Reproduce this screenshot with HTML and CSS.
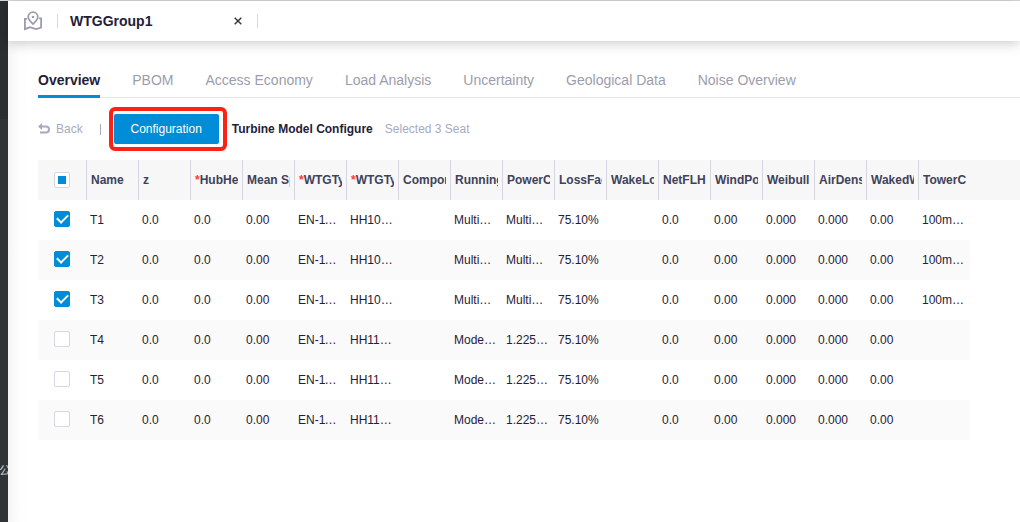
FILE: index.html
```html
<!DOCTYPE html>
<html lang="en">
<head>
<meta charset="utf-8">
<title>WTGGroup1</title>
<link rel="stylesheet" href="styles.css">
</head>
<body>
<div class="app">
  <aside class="rail"><div class="rail-head"></div><div class="rail-body"><span class="rail-label">公</span></div></aside>
  <div class="workspace">
    <header class="topbar">
      <svg class="map-icon" viewBox="0 0 20 20" fill="none" stroke="currentColor" stroke-width="1.8">
        <path d="M10 13C7.200 10.400 5.200 8.600 5.200 6a4.800 4.800 0 0 1 9.600 0C14.800 8.600 12.800 10.400 10 13z"/>
        <circle cx="10" cy="6" r="1.300" fill="currentColor" stroke="none"/>
        <path d="M4 7.800H1.900v10.300l5.100-2 6 2 5.100-1.600V7.400H16"/>
      </svg>
      <span class="divider"></span>
      <span class="file-name">WTGGroup1</span>
      <button class="close" type="button" aria-label="Close WTGGroup1"><svg viewBox="0 0 8 8" stroke="currentColor" stroke-width="1.400"><path d="M.7.7l6.600 6.600M7.300.7L.7 7.300"/></svg></button>
      <span class="divider"></span>
    </header>
    <main class="content">
      <nav class="tabs">
        <a class="tab active" href="#overview">Overview</a>
        <a class="tab" href="#pbom">PBOM</a>
        <a class="tab" href="#economy">Access Economy</a>
        <a class="tab" href="#load">Load Analysis</a>
        <a class="tab" href="#uncertainty">Uncertainty</a>
        <a class="tab" href="#geology">Geological Data</a>
        <a class="tab" href="#noise">Noise Overview</a>
      </nav>
      <div class="toolbar">
        <a class="back" href="#back"><svg viewBox="0 0 12 12" fill="none" stroke="currentColor" stroke-width="2"><path d="M3 3.500h5a3 3 0 0 1 0 6H2"/><path d="M4 0v7L0 3.500z" fill="currentColor" stroke="none"/></svg>Back</a>
        <span class="bar"></span>
        <span class="highlight"><button class="primary" type="button">Configuration</button></span>
        <strong class="title">Turbine Model Configure</strong>
        <span class="selected">Selected 3 Seat</span>
      </div>
      <table class="grid">
        <colgroup><col class="col-check"><col class="col-data" span="17"><col></colgroup>
        <thead>
          <tr>
            <th class="check"><input class="box partial" type="checkbox" aria-label="Select all"></th>
            <th>Name</th><th>z</th><th><i>*</i>HubHeight</th><th>Mean Speed</th><th><i>*</i>WTGType</th><th><i>*</i>WTGType</th><th>Component</th><th>Running</th><th>PowerCurve</th><th>LossFactor</th><th>WakeLoss</th><th>NetFLH</th><th>WindPower</th><th>Weibull</th><th>AirDensity</th><th>WakedWind</th><th>TowerCode</th><th class="rest"></th>
          </tr>
        </thead>
        <tbody>
          <tr><td class="check"><input class="box" type="checkbox" aria-label="T1" checked></td><td>T1</td><td>0.0</td><td>0.0</td><td>0.00</td><td>EN-110/2.2</td><td>HH100m</td><td></td><td>MultiMode</td><td>MultiMode</td><td>75.10%</td><td></td><td>0.0</td><td>0.00</td><td>0.000</td><td>0.000</td><td>0.00</td><td>100m-Steel</td><td class="rest"></td></tr>
          <tr><td class="check"><input class="box" type="checkbox" aria-label="T2" checked></td><td>T2</td><td>0.0</td><td>0.0</td><td>0.00</td><td>EN-110/2.2</td><td>HH100m</td><td></td><td>MultiMode</td><td>MultiMode</td><td>75.10%</td><td></td><td>0.0</td><td>0.00</td><td>0.000</td><td>0.000</td><td>0.00</td><td>100m-Steel</td><td class="rest"></td></tr>
          <tr><td class="check"><input class="box" type="checkbox" aria-label="T3" checked></td><td>T3</td><td>0.0</td><td>0.0</td><td>0.00</td><td>EN-110/2.2</td><td>HH100m</td><td></td><td>MultiMode</td><td>MultiMode</td><td>75.10%</td><td></td><td>0.0</td><td>0.00</td><td>0.000</td><td>0.000</td><td>0.00</td><td>100m-Steel</td><td class="rest"></td></tr>
          <tr><td class="check"><input class="box" type="checkbox" aria-label="T4"></td><td>T4</td><td>0.0</td><td>0.0</td><td>0.00</td><td>EN-110/2.2</td><td>HH110m</td><td></td><td>Mode-01</td><td>1.225kg/m3</td><td>75.10%</td><td></td><td>0.0</td><td>0.00</td><td>0.000</td><td>0.000</td><td>0.00</td><td></td><td class="rest"></td></tr>
          <tr><td class="check"><input class="box" type="checkbox" aria-label="T5"></td><td>T5</td><td>0.0</td><td>0.0</td><td>0.00</td><td>EN-110/2.2</td><td>HH110m</td><td></td><td>Mode-01</td><td>1.225kg/m3</td><td>75.10%</td><td></td><td>0.0</td><td>0.00</td><td>0.000</td><td>0.000</td><td>0.00</td><td></td><td class="rest"></td></tr>
          <tr><td class="check"><input class="box" type="checkbox" aria-label="T6"></td><td>T6</td><td>0.0</td><td>0.0</td><td>0.00</td><td>EN-110/2.2</td><td>HH110m</td><td></td><td>Mode-01</td><td>1.225kg/m3</td><td>75.10%</td><td></td><td>0.0</td><td>0.00</td><td>0.000</td><td>0.000</td><td>0.00</td><td></td><td class="rest"></td></tr>
        </tbody>
      </table>
    </main>
  </div>
</div>
</body>
</html>
```
FILE: styles.css
```css
* { box-sizing: border-box; }
body {
  margin: 0;
  font-family: "Liberation Sans", Arial, "Noto Sans CJK SC", sans-serif;
  font-size: 12px;
  color: #1f2139;
  background: #fff;
}
a { color: inherit; text-decoration: none; }
button { font: inherit; border: 0; cursor: pointer; }
.app { display: flex; min-height: 100vh; border-top: 1px solid #d9dade; }
.rail { flex: none; width: 8px; display: flex; flex-direction: column; background: #303437; }
.rail-head { height: 118px; background: #2a2e30; }
.rail-body { flex: 1; padding-top: 344px; overflow: hidden; }
.rail-label { display: block; margin-left: -1px; line-height: 16px; color: #c5c8cb; }
.workspace { flex: 1; min-width: 0; display: flex; flex-direction: column; }
.topbar {
  position: relative;
  display: flex;
  align-items: center;
  height: 40px;
  padding-left: 15px;
  background: #fff;
  box-shadow: 0 2px 12px rgba(0, 0, 0, .22);
}
.map-icon { width: 20px; height: 20px; margin-right: 14px; color: #9b9db0; }
.divider { width: 1px; height: 14px; background: #d8d9e0; }
.file-name { flex: none; width: 164px; padding-left: 12px; font-size: 14px; font-weight: bold; }
.close { display: flex; padding: 0; margin: 0 15px 0 12px; background: none; color: #333; }
.close svg { width: 8px; height: 8px; }
.content {
  flex: 1;
  padding: 23px 0 0 30px;
  overflow: hidden;
  background: linear-gradient(90deg, #f5f5f5, #fdfdfd 10px, #fff 20px);
}
.tabs { display: flex; gap: 32px; height: 34px; border-bottom: 1px solid #e4e5e8; }
.tab { height: 34px; line-height: 32px; font-size: 14px; color: #9c9dab; white-space: nowrap; }
.tab.active { color: #1f2139; font-weight: bold; border-bottom: 3px solid #008cd6; }
.toolbar { display: flex; align-items: center; height: 62px; white-space: nowrap; }
.back { display: flex; align-items: center; gap: 6px; color: #a7aabf; }
.back svg { width: 12px; height: 12px; }
.bar { width: 1px; height: 11px; margin: 0 8px 0 17px; background: #a7aabf; }
.highlight { padding: 3px 4px 3px 1px; border: 4px solid #ff2113; border-radius: 6px; }
.primary { display: block; width: 105px; height: 30px; padding: 0; border-radius: 2px; background: #008cd6; color: #fff; }
.title { margin: 0 12px 0 5px; }
.selected { color: #a7aabf; }
.grid { width: 100%; border-collapse: separate; border-spacing: 0; table-layout: fixed; }
.col-check { width: 48px; }
.col-data { width: 52px; }
.grid th, .grid td {
  height: 40px;
  padding: 0 4px;
  text-align: left;
  white-space: nowrap;
  overflow: hidden;
}
.grid th {
  padding-right: 0;
  border-left: 1px solid #d6d6e2;
  border-right: 4px solid #f7f7f7;
  background: #f7f7f7;
  color: #40425a;
}
.grid th.check, .grid th.rest { border: 0; }
.grid td { text-overflow: ellipsis; }
.grid tbody tr:nth-child(even) td:not(.rest) { background: #fafafa; }
.grid i { font-style: normal; color: #ff3b3b; }
.grid .check { padding: 0 16px; }
.grid td.check { padding-bottom: 2px; }
.box {
  appearance: none;
  display: block;
  width: 16px;
  height: 16px;
  margin: 0;
  border: 1px solid #d6d6e4;
  border-radius: 2px;
  background: #fff;
}
.box.partial { background: linear-gradient(#008cd6, #008cd6) center / 8px 8px no-repeat #fff; }
.box:checked { display: grid; place-items: center; border-color: #008cd6; background: #008cd6; }
.box:checked::before {
  content: "";
  width: 9px;
  height: 5px;
  margin-bottom: 3px;
  border: solid #fff;
  border-width: 0 0 2px 2px;
  transform: rotate(-45deg);
}
```
